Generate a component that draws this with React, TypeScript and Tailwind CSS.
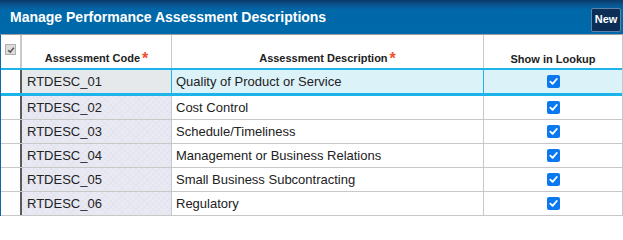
const rows = [
  { code: "RTDESC_01", desc: "Quality of Product or Service" },
  { code: "RTDESC_02", desc: "Cost Control" },
  { code: "RTDESC_03", desc: "Schedule/Timeliness" },
  { code: "RTDESC_04", desc: "Management or Business Relations" },
  { code: "RTDESC_05", desc: "Small Business Subcontracting" },
  { code: "RTDESC_06", desc: "Regulatory" },
];

const Check = () => (
  <div className="w-[13px] h-[13px] rounded-[2px] bg-[#0b78f0] flex items-center justify-center">
    <svg width="9" height="9" viewBox="0 0 10 10">
      <path d="M1.5 5.2 L4 7.6 L8.6 2.2" fill="none" stroke="white" strokeWidth="2" strokeLinecap="round" strokeLinejoin="round" />
    </svg>
  </div>
);

const Star = () => <span className="text-[#f0502a] text-[16px] font-bold leading-none relative top-[1px] ml-[2px]">*</span>;

const patterned =
  "bg-[#eaeaf4] bg-[image:repeating-linear-gradient(45deg,#e4e4ef_0px,#e4e4ef_1px,transparent_1px,transparent_4px),repeating-linear-gradient(-45deg,#e4e4ef_0px,#e4e4ef_1px,transparent_1px,transparent_4px)]";

export default function App() {
  return (
    <div className="w-[623px] h-[217px] bg-white overflow-hidden font-['Liberation_Sans',Arial,sans-serif] text-[#222]">
      <div className="h-[34px] flex items-center justify-between pl-[10px] pr-[2px] bg-[linear-gradient(to_bottom,#0b3a68_0px,#0a5592_5px,#0068a8_10px,#0069a9_100%)]">
        <h1 className="text-white font-bold text-[14px] mt-[1px]">Manage Performance Assessment Descriptions</h1>
        <button className="w-[30px] h-[24px] mt-[5px] bg-[#0c2d55] border border-[#5f83a6] rounded-[2px] text-white font-bold text-[11px]">
          New
        </button>
      </div>
      <div className="border-t border-[#9aa0a6] border-l border-l-[#0a69aa] border-r border-r-[#c8c8c8]">
        <div className="grid grid-cols-[19px_2px_150px_312px_1fr] h-[33px]">
          <div className="flex justify-center pt-[9px]">
            <div className="w-[11px] h-[11px] bg-[#dcdcdc] border border-[#b0b0b0] flex items-center justify-center">
              <svg width="8" height="8" viewBox="0 0 10 10">
                <path d="M1.5 5.2 L4 7.6 L8.6 2.2" fill="none" stroke="#555" strokeWidth="1.8" />
              </svg>
            </div>
          </div>
          <div className="bg-[#c9c9c9]" />
          <div className="border-r border-[#c8c8c8] flex items-end justify-center pb-[2px] text-[11px] font-bold">
            Assessment Code
            <Star />
          </div>
          <div className="border-r border-[#c8c8c8] flex items-end justify-center pb-[2px] text-[11px] font-bold">
            Assessment Description
            <Star />
          </div>
          <div className="flex items-end justify-center pb-[1px] text-[11px] font-bold">Show in Lookup</div>
        </div>
        {rows.map((r, i) => {
          const sel = i === 0;
          return (
            <div
              key={r.code}
              className={
                sel
                  ? "grid grid-cols-[19px_2px_150px_312px_1fr] h-[28px] border-t-2 border-b-[3px] border-[#1bb3e8]"
                  : "grid grid-cols-[19px_2px_150px_312px_1fr] h-[24px] border-b border-[#c8c8c8]"
              }
            >
              <div className="bg-white" />
              <div className="bg-[#5a5a5a]" />
              <div
                className={
                  sel
                    ? "bg-[#e5e9ec] border-r border-[#1bb3e8] flex items-center pl-[5px] text-[13px]"
                    : patterned + " border-r border-[#c8c8c8] flex items-center pl-[5px] text-[13px]"
                }
              >
                {r.code}
              </div>
              <div
                className={
                  sel
                    ? "bg-[#dcf2f9] border-r border-[#1bb3e8] flex items-center pl-[4px] text-[13px]"
                    : "border-r border-[#c8c8c8] flex items-center pl-[4px] text-[13px]"
                }
              >
                {r.desc}
              </div>
              <div className={sel ? "bg-[#dcf2f9] flex items-center justify-center" : "flex items-center justify-center"}>
                <Check />
              </div>
            </div>
          );
        })}
      </div>
    </div>
  );
}
